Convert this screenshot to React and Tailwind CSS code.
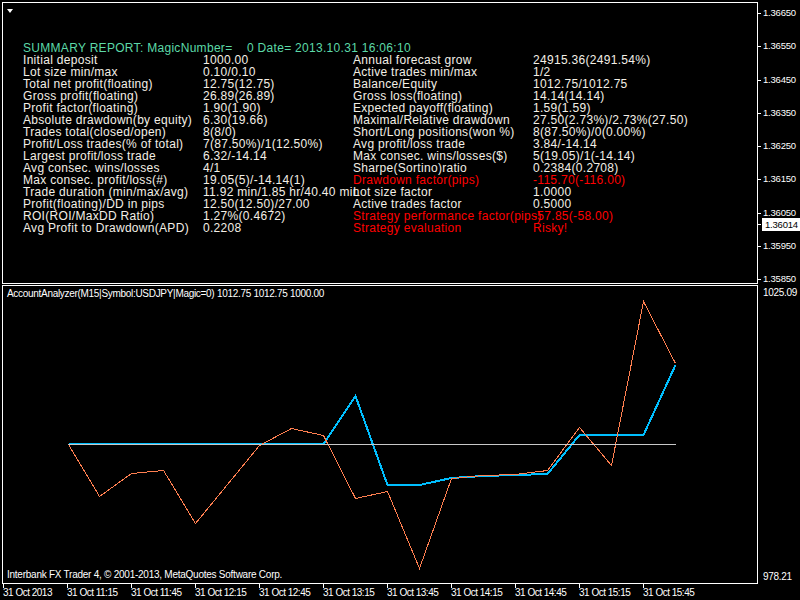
import React from "react";

const rows = [
  ["Initial deposit", "1000.00", "Annual forecast grow", "24915.36(2491.54%)"],
  ["Lot size min/max", "0.10/0.10", "Active trades min/max", "1/2"],
  ["Total net profit(floating)", "12.75(12.75)", "Balance/Equity", "1012.75/1012.75"],
  ["Gross profit(floating)", "26.89(26.89)", "Gross loss(floating)", "14.14(14.14)"],
  ["Profit factor(floating)", "1.90(1.90)", "Expected payoff(floating)", "1.59(1.59)"],
  ["Absolute drawdown(by equity)", "6.30(19.66)", "Maximal/Relative drawdown", "27.50(2.73%)/2.73%(27.50)"],
  ["Trades total(closed/open)", "8(8/0)", "Short/Long positions(won %)", "8(87.50%)/0(0.00%)"],
  ["Profit/Loss trades(% of total)", "7(87.50%)/1(12.50%)", "Avg profit/loss trade", "3.84/-14.14"],
  ["Largest profit/loss trade", "6.32/-14.14", "Max consec. wins/losses($)", "5(19.05)/1(-14.14)"],
  ["Avg consec. wins/losses", "4/1", "Sharpe(Sortino)ratio", "0.2384(0.2708)"],
  ["Max consec. profit/loss(#)", "19.05(5)/-14.14(1)", "Drawdown factor(pips)", "-115.70(-116.00)", true],
  ["Trade duration (min/max/avg)", "11.92 min/1.85 hr/40.40 min", "Lot size factor", "1.0000"],
  ["Profit(floating)/DD in pips", "12.50(12.50)/27.00", "Active trades factor", "0.5000"],
  ["ROI(ROI/MaxDD Ratio)", "1.27%(0.4672)", "Strategy performance factor(pips)", "-57.85(-58.00)", true],
  ["Avg Profit to Drawdown(APD)", "0.2208", "Strategy evaluation", "Risky!", true],
];

const prices = ["1.36650", "1.36550", "1.36450", "1.36350", "1.36250", "1.36150", "1.36050", "1.35950", "1.35850"];
const times = ["31 Oct 2013", "31 Oct 11:15", "31 Oct 11:45", "31 Oct 12:15", "31 Oct 12:45", "31 Oct 13:15", "31 Oct 13:45", "31 Oct 14:15", "31 Oct 14:45", "31 Oct 15:15", "31 Oct 15:45"];

const xs = Array.from({ length: 20 }, (_, i) => 67.5 + 31.95 * i);
const orangeY = [444, 496, 473, 470, 523, 484, 445, 428, 435, 498, 491, 568, 478, 475, 474, 470, 427, 465, 301, 363];
const blueY = [444, 444, 444, 444, 444, 444, 444, 444, 444, 396, 485, 485, 478, 476, 475, 474, 435, 435, 435, 365];

const pts = (ys, off) => ys.map((y, i) => `${Math.round(xs[i]) + 0.5},${y + off}`).join(" ");

export default function App() {
  return (
    <div className="w-[800px] h-[600px] bg-black overflow-hidden text-white font-['Liberation_Sans',Tahoma,sans-serif]">
      {/* top chart */}
      <div className="flex pt-[2px] pl-[2px]">
        <div className="w-[756px] h-[282px] border border-white flex flex-col">
          <div className="ml-[4px] mt-[6px] w-0 h-0 border-x-[3px] border-x-transparent border-t-[4px] border-t-white" />
          <div className="mt-[29px] pl-[20px] text-[12px] leading-[12px] tracking-[0.3px]">
            <div className="text-[#5cd9a8] whitespace-pre">SUMMARY REPORT: MagicNumber=    0 Date= 2013.10.31 16:06:10</div>
            <div className="grid grid-cols-[180px_150px_180px_1fr] text-[#f3efe6]">
              {rows.map((r, i) => (
                <React.Fragment key={i}>
                  <div className="whitespace-nowrap">{r[0]}</div>
                  <div className="whitespace-nowrap">{r[1]}</div>
                  <div className={"whitespace-nowrap " + (r[4] ? "text-[#ff0000]" : "")}>{r[2]}</div>
                  <div className={"whitespace-nowrap " + (r[4] ? "text-[#ff0000]" : "")}>{r[3]}</div>
                </React.Fragment>
              ))}
            </div>
          </div>
        </div>
        <div className="relative flex-1 h-[282px]">
          <div className="flex flex-col pt-[5px] text-[9.5px] leading-[12px] tracking-[-0.2px]">
            {prices.map((p) => (
              <div key={p} className="h-[33.25px] flex items-start">
                <div className="w-[3px] h-px bg-white mt-[6px]" />
                <span className="ml-[2px]">{p}</span>
              </div>
            ))}
          </div>
          <div className="absolute left-0 top-[216px] flex items-center">
            <div className="w-[3px] h-px bg-white" />
            <div className="ml-[1px] bg-white text-black text-[9.5px] leading-[13px] tracking-[-0.2px] px-[3px] w-[39px]">1.36014</div>
          </div>
        </div>
      </div>

      {/* bottom chart */}
      <div className="flex pl-[2px] mt-[1px]">
        <div className="relative w-[756px] h-[299px] border border-white flex flex-col justify-between">
          <svg className="absolute left-0 top-0" width="754" height="297" viewBox="3 286 754 297" shapeRendering="crispEdges">
            <polyline points={pts(blueY, 0)} fill="none" stroke="#00bfff" strokeWidth="2" />
            <polyline points={pts(orangeY, 0.5)} fill="none" stroke="#ff7f50" strokeWidth="1" />
            <line x1="67.5" y1="444.5" x2="675.5" y2="444.5" stroke="#c8c8c8" strokeWidth="1" />
          </svg>
          <div className="relative pl-[4px] pt-[2px] text-[10px] leading-[12px] tracking-[-0.3px] whitespace-nowrap">
            AccountAnalyzer(M15|Symbol:USDJPY|Magic=0) 1012.75 1012.75 1000.00
          </div>
          <div className="relative pl-[4px] pb-[2px] text-[10px] leading-[12px] tracking-[-0.25px] whitespace-nowrap">
            Interbank FX Trader 4, © 2001-2013, MetaQuotes Software Corp.
          </div>
        </div>
        <div className="flex-1 h-[299px] flex flex-col justify-between pl-[5px] text-[10px] leading-[12px] tracking-[-0.3px]">
          <div className="pt-[2px]">1025.09</div>
          <div className="pb-[1px]">978.21</div>
        </div>
      </div>

      {/* time axis */}
      <div className="flex pl-[3px] text-[10px] leading-[12px] tracking-[-0.5px]">
        {times.map((t) => (
          <div key={t} className="w-[64px] flex flex-col">
            <div className="w-px h-[4px] bg-white" />
            <span className="whitespace-nowrap -mt-[1px]">{t}</span>
          </div>
        ))}
      </div>
    </div>
  );
}
